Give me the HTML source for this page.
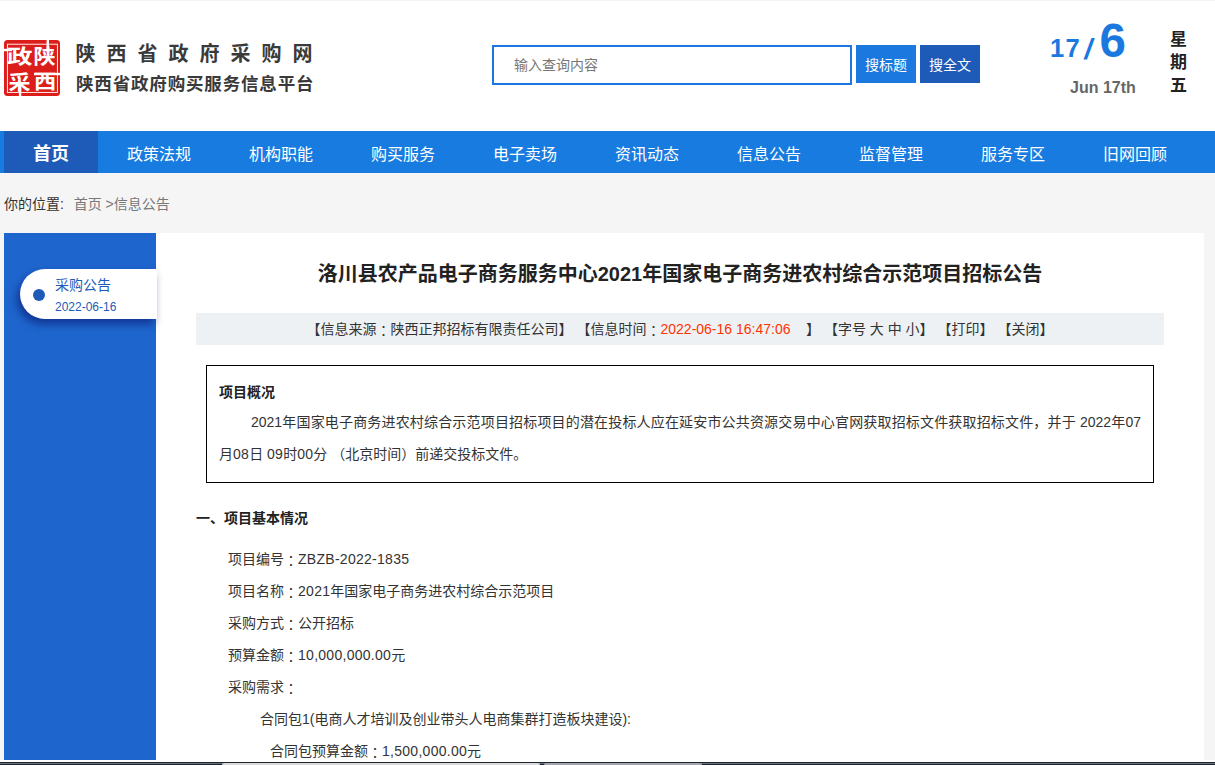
<!DOCTYPE html>
<html lang="zh-CN">
<head>
<meta charset="utf-8">
<title>陕西省政府采购网</title>
<style>
*{box-sizing:border-box;margin:0;padding:0}
html,body{width:1215px;height:765px;overflow:hidden}
body{position:relative;background:#f5f5f5;font-family:"Liberation Sans","Noto Sans CJK SC",sans-serif;font-size:14px;color:#333}
.abs{position:absolute}
#header{left:0;top:0;width:1215px;height:131px;background:#fff;border-top:1px solid #f4f4f4}
/* seal */
#seal{left:4px;top:40px;width:56px;height:56px}
.lt1{left:75.5px;top:39px;height:30px;line-height:30px;font-size:20px;font-weight:700;letter-spacing:11px;color:#3a3a3a;white-space:nowrap}
.lt2{left:76px;top:69.3px;height:30px;line-height:30px;font-size:17.5px;font-weight:700;letter-spacing:0.83px;color:#3a3a3a;white-space:nowrap}
#sbox{left:492px;top:45px;width:360px;height:40px;border:2px solid #1a78de;background:#fff;padding-left:20px;line-height:36px;font-size:14px;color:#777}
.btn{top:45px;width:60px;height:38px;line-height:40px;overflow:hidden;text-align:center;color:#fff;font-size:14px}
#b1{left:856px;background:#1a78de}
#b2{left:920px;background:#1e5bb8}
#d17{left:1050px;top:31px;font-size:25.5px;line-height:34px;font-weight:700;color:#1a78de;white-space:nowrap;letter-spacing:1.3px}
#dsl{left:1084.6px;top:32.1px;font-size:29px;line-height:34px;font-weight:700;color:#1a78de;transform:skewX(-10deg);transform-origin:50% 50%}
#d6{left:1099.5px;top:13.6px;font-size:47.5px;line-height:54px;font-weight:700;color:#1a78de}
#djun{left:1070px;top:77.5px;font-size:16px;line-height:20px;font-weight:700;color:#666;white-space:nowrap}
#wk{left:1170px;top:28px;width:17px;font-size:17px;line-height:23px;font-weight:700;color:#222;text-align:center}
#nav{left:0;top:131px;width:1215px;height:42px;background:#187bdf}
#nav div{position:absolute;top:0;height:42px;line-height:47px;overflow:hidden;width:122px;text-align:center;color:#fff;font-size:16px}
#nav .on{left:4px;width:94px;background:#1e5bb8;font-size:18px;font-weight:700}
#crumb{left:4px;top:194px;height:20px;line-height:20px;font-size:14px;color:#333;white-space:pre}
#crumb span{color:#777}
#side{left:4px;top:233px;width:152px;height:527px;background:#1e66cd}
#main{left:156px;top:233px;width:1048px;height:527px;background:#fff}
#pill{left:20px;top:269px;width:137px;height:50px;background:#fff;border-radius:25px 0 0 25px;box-shadow:-3px 5px 9px rgba(10,20,110,.6)}
#dot{left:33px;top:289px;width:12px;height:12px;border-radius:50%;background:#1e5bb8}
#pt{left:55px;top:275px;line-height:20px;font-size:14px;color:#1e5bb8;white-space:nowrap}
#pd{left:55px;top:297.8px;line-height:18px;font-size:12px;color:#1e5bb8;white-space:nowrap}
#title{left:156px;top:258.7px;width:1048px;text-align:center;font-size:20px;line-height:30px;font-weight:700;color:#222;white-space:nowrap}
#info{left:196px;top:313px;width:968px;height:32px;background:#eef1f4;line-height:32px;text-align:center;font-size:14px;color:#333;white-space:pre}
#info b{font-weight:400;color:#ff3300}
#box{left:206px;top:365px;width:948px;height:118px;border:1px solid #000}
#box h4{position:absolute;left:12px;top:10px;font-size:14px;line-height:32px;font-weight:700;color:#222}
#box p{position:absolute;left:12px;width:922px;line-height:32px;font-size:14px;color:#333;white-space:nowrap}
#p1{top:40px;padding-left:32px;text-align:justify;text-align-last:justify}
#p2{top:72px}
.ln{line-height:32px;height:32px;font-size:14px;color:#333;white-space:nowrap}
#h1{left:196px;top:502px;font-weight:700;color:#222}
#wstrip{left:0;top:760px;width:1215px;height:2px;background:#fff}
#taskbar{left:0;top:762px;width:1215px;height:3px;background:linear-gradient(#1f252d 0,#1f252d 1px,#687381 1px,#687381 2px,#1b222c 2px)}
#taskbar i{position:absolute;top:1px;height:2px;border-radius:2px 2px 0 0}
.c{font-family:"Noto Sans CJK JP",sans-serif;line-height:0;position:relative;top:1.5px}
.l{letter-spacing:.28px}
</style>
</head>
<body>
<div id="header" class="abs"></div>
<svg id="seal" class="abs" viewBox="0 0 56 56">
  <rect x="0" y="0" width="56" height="56" rx="3.5" fill="#dc1e1a"/>
  <rect x="3.4" y="4.2" width="50" height="48.2" fill="none" stroke="#fff" stroke-width="0.9"/>
  <g font-family="'Liberation Sans','Noto Sans CJK SC',sans-serif" font-weight="700" fill="#fff" font-size="20">
    <text x="3" y="24" textLength="25.5" lengthAdjust="spacingAndGlyphs">政</text>
    <text x="29.5" y="24" textLength="22" lengthAdjust="spacingAndGlyphs">陕</text>
    <text x="4.5" y="49.6" textLength="22" lengthAdjust="spacingAndGlyphs">采</text>
    <text x="29.8" y="49.2" textLength="22.5" lengthAdjust="spacingAndGlyphs">西</text>
  </g>
  <rect x="42.6" y="0" width="2.4" height="12" fill="#fff"/>
  <rect x="0" y="8.8" width="8" height="2.4" fill="#fff"/>
  <rect x="30" y="32.8" width="26" height="2.4" fill="#fff"/>
  <rect x="14.9" y="44" width="2.4" height="12" fill="#fff"/>
</svg>
<div class="abs lt1">陕西省政府采购网</div>
<div class="abs lt2">陕西省政府购买服务信息平台</div>
<div id="sbox" class="abs">输入查询内容</div>
<div id="b1" class="abs btn">搜标题</div>
<div id="b2" class="abs btn">搜全文</div>
<div id="d17" class="abs">17</div>
<div id="dsl" class="abs">/</div>
<div id="d6" class="abs">6</div>
<div id="djun" class="abs">Jun 17th</div>
<div id="wk" class="abs">星期五</div>

<div id="nav" class="abs">
  <div class="on">首页</div>
  <div style="left:98px">政策法规</div>
  <div style="left:220px">机构职能</div>
  <div style="left:342px">购买服务</div>
  <div style="left:464px">电子卖场</div>
  <div style="left:586px">资讯动态</div>
  <div style="left:708px">信息公告</div>
  <div style="left:830px">监督管理</div>
  <div style="left:952px">服务专区</div>
  <div style="left:1074px">旧网回顾</div>
</div>
<div id="crumb" class="abs">你的位置:  <span style="margin-left:2px">首页 &gt;信息公告</span></div>

<div id="side" class="abs"></div>
<div id="main" class="abs"></div>
<div id="pill" class="abs"></div>
<div id="dot" class="abs"></div>
<div id="pt" class="abs">采购公告</div>
<div id="pd" class="abs">2022-06-16</div>

<div id="title" class="abs">洛川县农产品电子商务服务中心2021年国家电子商务进农村综合示范项目招标公告</div>
<div id="info" class="abs">【信息来源<span class="c" lang="ja">：</span>陕西正邦招标有限责任公司】 【信息时间<span class="c" lang="ja">：</span><b>2022-06-16 16:47:06</b>    】 【字号 大 中 小】 【打印】 【关闭】</div>

<div id="box" class="abs">
  <h4>项目概况</h4>
  <p id="p1">2021年国家电子商务进农村综合示范项目招标项目的潜在投标人应在延安市公共资源交易中心官网获取招标文件获取招标文件，并于 2022年07</p>
  <p id="p2">月<span class="l">08</span>日 <span class="l">09</span>时<span class="l">00</span>分 （北京时间）前递交投标文件。</p>
</div>

<div id="h1" class="abs ln">一、项目基本情况</div>
<div class="abs ln" style="left:228px;top:543px">项目编号<span class="c" lang="ja">：</span><span class="l">ZBZB-2022-1835</span></div>
<div class="abs ln" style="left:228px;top:575px">项目名称<span class="c" lang="ja">：</span><span class="l">2021</span>年国家电子商务进农村综合示范项目</div>
<div class="abs ln" style="left:228px;top:607px">采购方式<span class="c" lang="ja">：</span>公开招标</div>
<div class="abs ln" style="left:228px;top:639px">预算金额<span class="c" lang="ja">：</span><span class="l">10,000,000.00</span>元</div>
<div class="abs ln" style="left:228px;top:671px">采购需求<span class="c" lang="ja">：</span></div>
<div class="abs ln" style="left:260px;top:703px">合同包1(电商人才培训及创业带头人电商集群打造板块建设):</div>
<div class="abs ln" style="left:270px;top:735px">合同包预算金额<span class="c" lang="ja">：</span><span class="l">1,500,000.00</span>元</div>

<div id="wstrip" class="abs"></div>
<div id="taskbar" class="abs"><i style="left:222px;width:318px;background:#d9dadc"></i><i style="left:544px;width:158px;background:#a3a7ac"></i></div>
</body>
</html>
